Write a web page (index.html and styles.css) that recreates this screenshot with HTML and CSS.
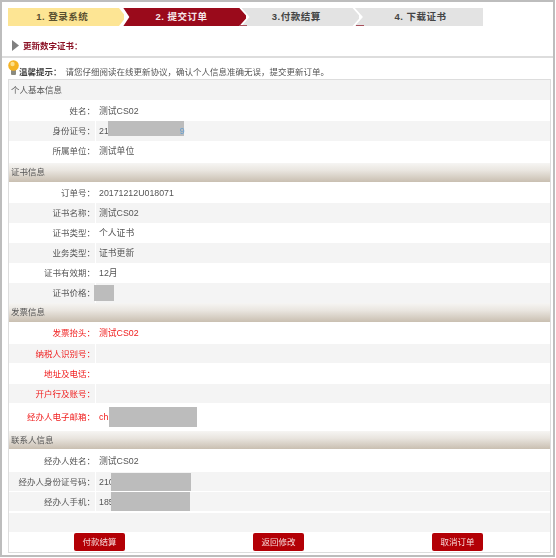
FILE: index.html
```html
<!DOCTYPE html>
<html lang="zh-CN">
<head>
<meta charset="utf-8">
<title>更新数字证书</title>
<link rel="stylesheet" href="styles.css">
</head>
<body>
<div class="frame">
  <div class="steps">
    <div class="step step-done">1. 登录系统</div>
    <div class="step step-current">2. 提交订单</div>
    <div class="step step-todo">3.付款结算</div>
    <div class="step step-todo step-last">4. 下载证书</div>
    <i class="tick tick-a"></i>
    <i class="tick tick-b"></i>
  </div>
  <div class="title">
    <svg class="arrow" width="7" height="11" viewBox="0 0 7 11"><path d="M0 0L7 5.5L0 11Z" fill="#808080"/></svg>
    <span>更新数字证书：</span>
  </div>
  <div class="hint">
    <svg class="bulb" width="11" height="15" viewBox="0 0 11 15"><rect x="3" y="9" width="5" height="6" rx="1" fill="#8a8a80"/><circle cx="5.5" cy="5.5" r="5.3" fill="#f5b324"/><circle cx="4.5" cy="4" r="2.2" fill="#fde08a"/></svg>
    <b>温馨提示：</b><span class="hint-text">请您仔细阅读在线更新协议，确认个人信息准确无误，提交更新订单。</span>
  </div>
  <div class="panel">
    <div class="head head-first">个人基本信息</div>
    <div class="row h21"><div class="key">姓名：</div><div class="val">测试CS02</div></div>
    <div class="row alt"><div class="key">身份证号：</div><div class="val">21<span class="mask mask-id"></span><span class="tail">9</span></div></div>
    <div class="row h22 lift"><div class="key">所属单位：</div><div class="val">测试单位</div></div>
    <div class="head">证书信息</div>
    <div class="row h21"><div class="key">订单号：</div><div class="val">20171212U018071</div></div>
    <div class="row alt"><div class="key">证书名称：</div><div class="val">测试CS02</div></div>
    <div class="row"><div class="key">证书类型：</div><div class="val">个人证书</div></div>
    <div class="row alt"><div class="key">业务类型：</div><div class="val">证书更新</div></div>
    <div class="row"><div class="key">证书有效期：</div><div class="val">12月</div></div>
    <div class="row alt"><div class="key">证书价格：</div><div class="val"><span class="mask mask-price"></span></div></div>
    <div class="head">发票信息</div>
    <div class="row h22 red"><div class="key">发票抬头：</div><div class="val">测试CS02</div></div>
    <div class="row alt h19 red"><div class="key">纳税人识别号：</div><div class="val"></div></div>
    <div class="row h21 red"><div class="key">地址及电话：</div><div class="val"></div></div>
    <div class="row alt h19 red"><div class="key">开户行及账号：</div><div class="val"></div></div>
    <div class="row h28 red"><div class="key">经办人电子邮箱：</div><div class="val">ch<span class="mask mask-mail"></span></div></div>
    <div class="head h18">联系人信息</div>
    <div class="row h23"><div class="key">经办人姓名：</div><div class="val">测试CS02</div></div>
    <div class="row alt h19"><div class="key">经办人身份证号码：</div><div class="val">210<span class="mask mask-card"></span></div></div>
    <div class="row alt h19 gap1"><div class="key">经办人手机：</div><div class="val">185<span class="mask mask-phone"></span></div></div>
    <div class="row-empty"></div>
    <div class="actions">
      <button class="btn" type="button">付款结算</button>
      <button class="btn" type="button">返回修改</button>
      <button class="btn" type="button">取消订单</button>
    </div>
  </div>
</div>
</body>
</html>
```
FILE: styles.css
```css
* { box-sizing: border-box; }
html, body { margin: 0; padding: 0; background: #fff; }
body {
  width: 556px;
  height: 558px;
  overflow: hidden;
  font-family: "Liberation Sans", "Noto Sans CJK SC", sans-serif;
  font-size: 8.5px;
  line-height: 12px;
  color: #555;
}
.frame {
  width: 555px;
  height: 557px;
  border: 2px solid #bdbdbd;
  padding: 6px 0 0 6px;
  filter: blur(0.4px);
}
.steps { position: relative; display: flex; width: 475px; height: 18px; font-weight: bold; font-size: 9.5px; }
.step {
  display: flex;
  align-items: center;
  justify-content: center;
  height: 18px;
  letter-spacing: 0.5px;
}
.step-done { width: 118px; background: #fde594; color: #5a5030; clip-path: polygon(0 0, 111px 0, 118px 9px, 111px 100%, 0 100%); padding-right: 8px; }
.step-current { width: 124px; margin-left: -1px; background: #9a0a1b; color: #f6e8ea; clip-path: polygon(0 0, 116px 0, 124px 9px, 116px 100%, 0 100%, 6px 9px); padding-right: 6px; }
.step-todo { width: 119px; margin-left: -4px; background: #e3e3e3; color: #444; clip-path: polygon(0 0, 111px 0, 119px 9px, 111px 100%, 0 100%, 8px 9px); padding-right: 8px; }
.step-last { width: 130px; margin-left: -4px; clip-path: polygon(0 0, 100% 0, 100% 100%, 0 100%, 8px 9px); padding-right: 0; padding-left: 3px; }
.tick { position: absolute; bottom: 0; height: 1px; width: 8px; background: #a8505c; }
.tick-a { left: 231px; }
.tick-b { left: 348px; }
.title {
  display: flex;
  align-items: center;
  gap: 4px;
  height: 32px;
  margin-left: -6px;
  padding: 10px 0 0 10px;
  border-bottom: 2px solid #ddd;
  color: #8c1226;
  font-weight: bold;
}
.title .arrow { margin-top: -2px; }
.hint {
  position: relative;
  height: 21px;
  padding: 8px 0 0 11px;
  white-space: nowrap;
}
.hint b { color: #444; }
.hint-text { margin-left: 4px; }
.bulb { position: absolute; left: 0; top: 2px; }
.panel { width: 543px; height: 474px; border: 1px solid #ddd; }
.head {
  height: 19px;
  line-height: 19px;
  padding-left: 2px;
  background: linear-gradient(#f6f5f3, #e9e5df 40%, #c9bfb1);
}
.head-first { background: #f3f3f3; height: 20px; line-height: 20px; }
.h18 { height: 18px; line-height: 18px; }
.row { display: flex; height: 20px; align-items: stretch; background: #fff; }
.row.alt { background: #f4f4f4; }
.h19.row { height: 19px; }
.h21 { height: 21px; }
.h22 { height: 22px; }
.h23 { height: 23px; }
.h28 { height: 28px; }
.lift { padding-bottom: 2px; }
.gap1 { margin-top: 1px; }
.key {
  flex: none;
  width: 87px;
  display: flex;
  align-items: center;
  justify-content: flex-end;
  white-space: nowrap;
  border-right: 1px solid #fff;
}
.val { flex: 1; display: flex; align-items: center; padding-left: 3px; font-size: 8.8px; }
.red { color: #f01c1c; }
.row-empty { height: 19px; margin-top: 2px; background: #f4f4f4; }
.mask { display: block; height: 15px; background: #bcbcbc; }
.tail { color: #6aa0d0; margin-left: -4px; }
.mask-id { width: 76px; margin-left: -1px; align-self: flex-start; }
.mask-price { width: 20px; height: 16px; margin-left: -5px; }
.mask-mail { width: 88px; height: 20px; margin-left: 1px; }
.mask-card { width: 80px; height: 18px; margin-left: -3px; }
.mask-phone { width: 79px; height: 19px; margin-left: -3px; }
.actions { display: flex; justify-content: space-between; padding: 1px 67px 0 65px; height: 19px; }
.btn {
  width: 51px;
  height: 18px;
  border: 0;
  border-radius: 2px;
  padding: 0;
  background: #b30006;
  color: #f6d9d9;
  font: inherit;
}
```
